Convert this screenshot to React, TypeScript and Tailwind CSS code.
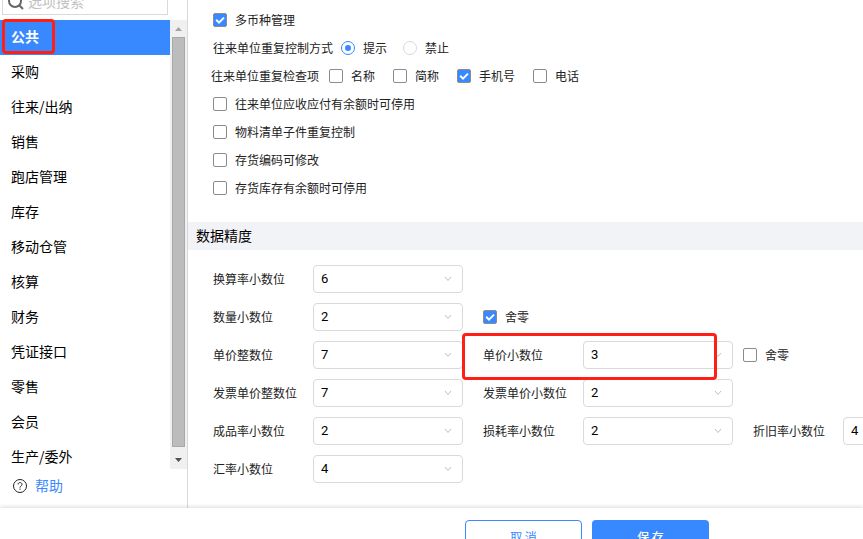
import { useState } from "react";
import type { ReactNode } from "react";

const MENU_ITEMS = [
  "公共",
  "采购",
  "往来/出纳",
  "销售",
  "跑店管理",
  "库存",
  "移动仓管",
  "核算",
  "财务",
  "凭证接口",
  "零售",
  "会员",
  "生产/委外"
];

const DIGIT_OPTIONS = [0, 1, 2, 3, 4, 5, 6, 7, 8];

function CheckOption({ label, defaultChecked = false }: { label: string; defaultChecked?: boolean }) {
  return (
    <label className="flex shrink-0 items-center gap-2">
      <span className="grid size-3.5 place-items-center">
        <input
          type="checkbox"
          defaultChecked={defaultChecked}
          className="peer col-start-1 row-start-1 size-3.5 appearance-none rounded-xs border border-[#8c8c8c] bg-white checked:bg-[#3888ff]"
        />
        <svg
          viewBox="0 0 14 14"
          className="pointer-events-none invisible col-start-1 row-start-1 size-3.5 peer-checked:visible"
          fill="none"
          stroke="#fff"
          strokeWidth="2"
        >
          <path d="M3.2 6.800 6 9.600 11 4.600" />
        </svg>
      </span>
      {label}
    </label>
  );
}

function RadioOption({ label, name, defaultChecked = false }: { label: string; name: string; defaultChecked?: boolean }) {
  return (
    <label className="flex shrink-0 items-center gap-2">
      <span className="grid size-3.5 place-items-center">
        <input
          type="radio"
          name={name}
          defaultChecked={defaultChecked}
          className="peer col-start-1 row-start-1 size-3.5 appearance-none rounded-full border border-[#d9d9d9] bg-white checked:border-[#3888ff]"
        />
        <span className="pointer-events-none invisible col-start-1 row-start-1 size-1.5 rounded-full bg-[#3888ff] peer-checked:visible" />
      </span>
      {label}
    </label>
  );
}

type DigitFieldProps = {
  id: string;
  label: string;
  value: number;
  compact?: boolean;
  children?: ReactNode;
};

function DigitField({ id, label, value, compact = false, children }: DigitFieldProps) {
  return (
    <div className="relative flex shrink-0 items-center">
      <label htmlFor={id} className={compact ? "w-[90px] shrink-0" : "w-[100px] shrink-0"}>
        {label}
      </label>
      <div className="grid w-[150px] shrink-0 items-center">
        <select
          id={id}
          defaultValue={value}
          className="col-start-1 row-start-1 h-7 w-full appearance-none rounded-sm border border-[#d9d9d9] bg-white px-[7px] font-[Roboto,'Noto_Sans_CJK_SC',sans-serif] text-[13px] text-black"
        >
          {DIGIT_OPTIONS.map((option) => (
            <option key={option} value={option}>
              {option}
            </option>
          ))}
        </select>
        <svg
          viewBox="0 0 8 6"
          className="pointer-events-none col-start-1 row-start-1 mr-[11px] h-1.5 w-2 justify-self-end"
          fill="none"
          stroke="#bfbfbf"
        >
          <path d="M1 1 4 4.500 7 1" />
        </svg>
      </div>
      {children}
    </div>
  );
}

function Sidebar() {
  const [active, setActive] = useState("公共");

  return (
    <aside className="flex w-[188px] shrink-0 flex-col border-r border-[#d9d9d9] text-sm text-black">
      <label className="-mt-3 mr-[19px] ml-0.5 flex h-[27px] items-center gap-[3px] border border-[#d9d9d9] pb-0.5 pl-1">
        <svg viewBox="0 0 18 18" className="size-[18px] shrink-0" fill="none" stroke="#666" strokeWidth="2">
          <circle cx="8" cy="9" r="6" />
          <path d="m12 13 4 4" />
        </svg>
        <input
          aria-label="选项搜索"
          placeholder="选项搜索"
          className="w-full min-w-0 bg-transparent text-sm outline-none placeholder:text-[#bfbfbf]"
        />
      </label>

      <div className="mt-[5px] flex h-[449px]">
        <nav className="min-w-0 flex-1 overflow-hidden">
          {MENU_ITEMS.map((item) => (
            <button
              key={item}
              type="button"
              onClick={() => setActive(item)}
              className={
                item === active
                  ? "block h-[35px] w-full bg-[#3888ff] pb-1 pl-[11px] text-left font-bold text-white"
                  : "block h-[35px] w-full pb-1 pl-[11px] text-left"
              }
            >
              {item}
            </button>
          ))}
        </nav>
        <div className="flex w-[17px] flex-col items-center bg-[#f0f0f0]">
          <svg viewBox="0 0 17 17" className="size-[17px] shrink-0" fill="#a3a3a3">
            <path d="M5 11h7L8.500 7z" />
          </svg>
          <div className="mb-[5px] w-[13px] flex-1 border border-[#a8a8a8] bg-[#bcbcbc]" />
          <svg viewBox="0 0 17 17" className="size-[17px] shrink-0" fill="#505050">
            <path d="M5 6h7l-3.500 4z" />
          </svg>
        </div>
      </div>

      <a href="#help" className="mt-1.5 mb-[11px] flex h-[22px] items-center gap-2 pl-[13px] text-[#3888ff]">
        <svg viewBox="0 0 14 14" className="size-3.5" fill="none" stroke="#222">
          <circle cx="7" cy="7" r="6.500" />
          <path d="M5 5.500c0-2.600 4-2.600 4 0C9 7 7 7 7 8.600M7 9.600v1.200" />
        </svg>
        <span className="pb-0.5">帮助</span>
      </a>
    </aside>
  );
}

export default function App() {
  return (
    <div className="h-screen overflow-hidden bg-white font-['Noto_Sans_CJK_SC',sans-serif] text-xs text-[#222]">
      <div className="relative flex">
        <Sidebar />
        {/* highlight around the current menu entry */}
        <div className="pointer-events-none absolute top-[19px] left-0.5 h-[35px] w-[53px] rounded-sm border-3 border-[#ff1f14]" />

        <main className="min-w-0 flex-1 overflow-hidden">
          <section className="grid auto-rows-[28px] items-center pt-1.5 pl-[25px]">
            <CheckOption label="多币种管理" defaultChecked />
            <div role="radiogroup" aria-label="往来单位重复控制方式" className="flex items-center gap-4">
              <div className="flex items-center gap-2">
                <span>往来单位重复控制方式</span>
                <RadioOption name="duplicate" label="提示" defaultChecked />
              </div>
              <RadioOption name="duplicate" label="禁止" />
            </div>
            <div role="group" aria-label="往来单位重复检查项" className="-ml-0.5 flex items-center gap-[18px]">
              <div className="flex items-center gap-2.5">
                <span>往来单位重复检查项</span>
                <CheckOption label="名称" />
              </div>
              <CheckOption label="简称" />
              <CheckOption label="手机号" defaultChecked />
              <CheckOption label="电话" />
            </div>
            <CheckOption label="往来单位应收应付有余额时可停用" />
            <CheckOption label="物料清单子件重复控制" />
            <CheckOption label="存货编码可修改" />
            <CheckOption label="存货库存有余额时可停用" />
          </section>

          <h2 className="mt-5 flex h-7 items-center bg-[#f2f3f7] pb-0.5 pl-2 text-sm text-black">数据精度</h2>

          <section className="flex flex-col gap-2.5 pt-[15px] pl-[25px]">
            <DigitField id="convert" label="换算率小数位" value={6} />
            <div className="flex gap-5">
              <DigitField id="quantity" label="数量小数位" value={2} />
              <CheckOption label="舍零" defaultChecked />
            </div>
            <div className="flex gap-5">
              <DigitField id="price-int" label="单价整数位" value={7} />
              <DigitField id="price-dec" label="单价小数位" value={3}>
                <div className="ml-2.5">
                  <CheckOption label="舍零" />
                </div>
                <div className="pointer-events-none absolute -top-2 -left-[21px] z-10 h-[47px] w-[255px] rounded-sm border-3 border-[#ff1f14]" />
              </DigitField>
            </div>
            <div className="flex gap-5">
              <DigitField id="invoice-int" label="发票单价整数位" value={7} />
              <DigitField id="invoice-dec" label="发票单价小数位" value={2} />
            </div>
            <div className="flex gap-5">
              <DigitField id="yield" label="成品率小数位" value={2} />
              <DigitField id="loss" label="损耗率小数位" value={2} />
              <DigitField id="depreciation" label="折旧率小数位" value={4} compact />
            </div>
            <DigitField id="exchange" label="汇率小数位" value={4} />
          </section>
        </main>
      </div>

      <footer className="relative flex gap-2.5 bg-white pt-3 pb-3 pl-[465px] shadow-[0_-1px_4px_rgba(0,0,0,0.15)]">
        <button type="button" className="h-9 w-[117px] rounded-sm border border-[#3888ff] bg-white pb-0.5 text-[#3888ff]">
          取 消
        </button>
        <button type="button" className="h-9 w-[117px] rounded-sm bg-[#3888ff] pb-0.5 font-medium text-white">
          保 存
        </button>
      </footer>
    </div>
  );
}
